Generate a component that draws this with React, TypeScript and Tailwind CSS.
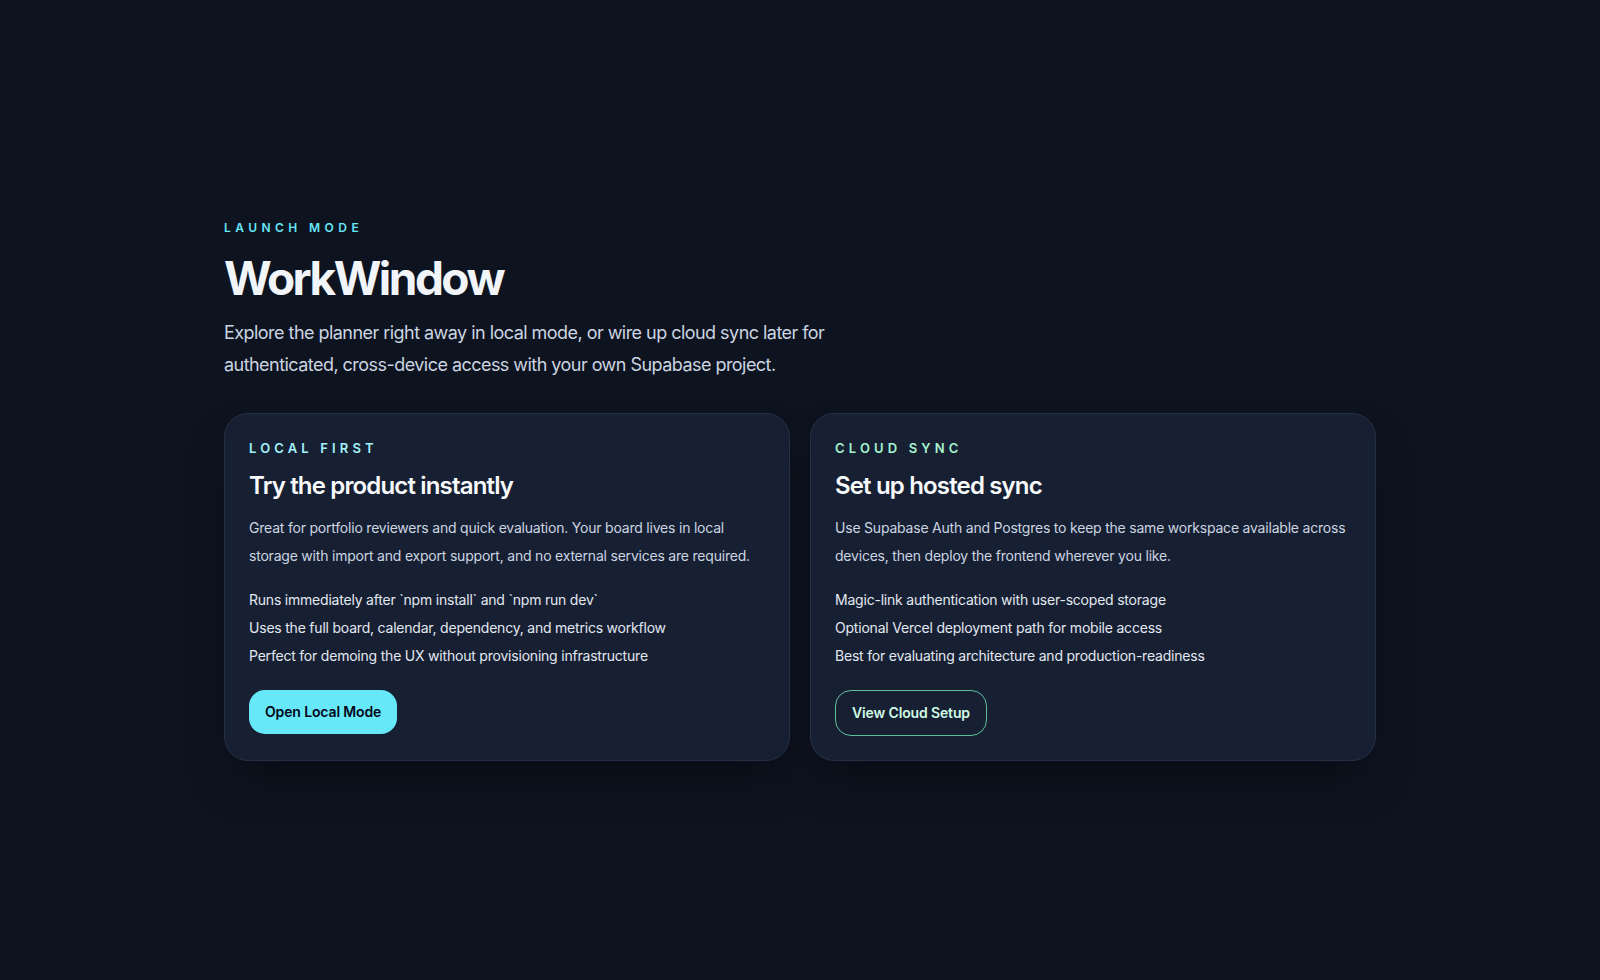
import React from "react";

type Mode = {
  eyebrow: string;
  eyebrowClass: string;
  title: string;
  description: string;
  points: string[];
  action: React.ReactNode;
};

const modes: Mode[] = [
  {
    eyebrow: "Local first",
    eyebrowClass: "text-[#a5f3fc]",
    title: "Try the product instantly",
    description:
      "Great for portfolio reviewers and quick evaluation. Your board lives in local storage with import and export support, and no external services are required.",
    points: [
      "Runs immediately after `npm install` and `npm run dev`",
      "Uses the full board, calendar, dependency, and metrics workflow",
      "Perfect for demoing the UX without provisioning infrastructure",
    ],
    action: (
      <button className="rounded-2xl bg-[#67e8f9] px-4 py-3 text-sm font-semibold leading-5 tracking-[-0.01em] text-[#020617]">
        Open Local Mode
      </button>
    ),
  },
  {
    eyebrow: "Cloud sync",
    eyebrowClass: "text-[#a7f3d0]",
    title: "Set up hosted sync",
    description:
      "Use Supabase Auth and Postgres to keep the same workspace available across devices, then deploy the frontend wherever you like.",
    points: [
      "Magic-link authentication with user-scoped storage",
      "Optional Vercel deployment path for mobile access",
      "Best for evaluating architecture and production-readiness",
    ],
    action: (
      <button className="rounded-2xl border border-[#6ee7b7]/80 px-4 py-3 text-sm font-semibold leading-5 tracking-[-0.01em] text-[#d1fae5]">
        View Cloud Setup
      </button>
    ),
  },
];

function ModeCard({ mode }: { mode: Mode }) {
  return (
    <section className="rounded-3xl border border-[#263045] bg-[#172033] p-6 shadow-2xl shadow-black/40">
      <p className={`text-[13px] font-semibold uppercase leading-5 tracking-[0.32em] ${mode.eyebrowClass}`}>
        {mode.eyebrow}
      </p>
      <h2 className="mt-3 text-2xl font-semibold leading-8 tracking-[-0.035em] text-[#f8fafc]">
        {mode.title}
      </h2>
      <p className="mt-3 text-sm leading-7 tracking-[-0.015em] text-[#cbd5e1]">{mode.description}</p>
      <ul className="mt-4 text-sm leading-7 tracking-[-0.015em] text-[#e2e8f0]">
        {mode.points.map((p) => (
          <li key={p}>{p}</li>
        ))}
      </ul>
      <div className="mt-5">{mode.action}</div>
    </section>
  );
}

export default function App() {
  return (
    <div
      className="flex min-h-screen items-center justify-center bg-[#0e1320] px-6"
      style={{ fontFamily: "Inter, 'Noto Sans', sans-serif" }}
    >
      <main className="w-full max-w-6xl">
        <p className="text-xs font-semibold uppercase leading-4 tracking-[0.37em] text-[#67e8f9]">
          Launch mode
        </p>
        <h1 className="mt-[18px] text-[46px] font-bold leading-[48px] tracking-[-0.055em] text-[#f1f5f9]">
          WorkWindow
        </h1>
        <p className="mt-[15px] max-w-2xl text-lg leading-8 tracking-[-0.03em] text-[#cbd5e1]">
          Explore the planner right away in local mode, or wire up cloud sync later for
          authenticated, cross-device access with your own Supabase project.
        </p>
        <div className="mt-8 grid grid-cols-2 gap-5">
          {modes.map((m) => (
            <ModeCard key={m.title} mode={m} />
          ))}
        </div>
      </main>
    </div>
  );
}
